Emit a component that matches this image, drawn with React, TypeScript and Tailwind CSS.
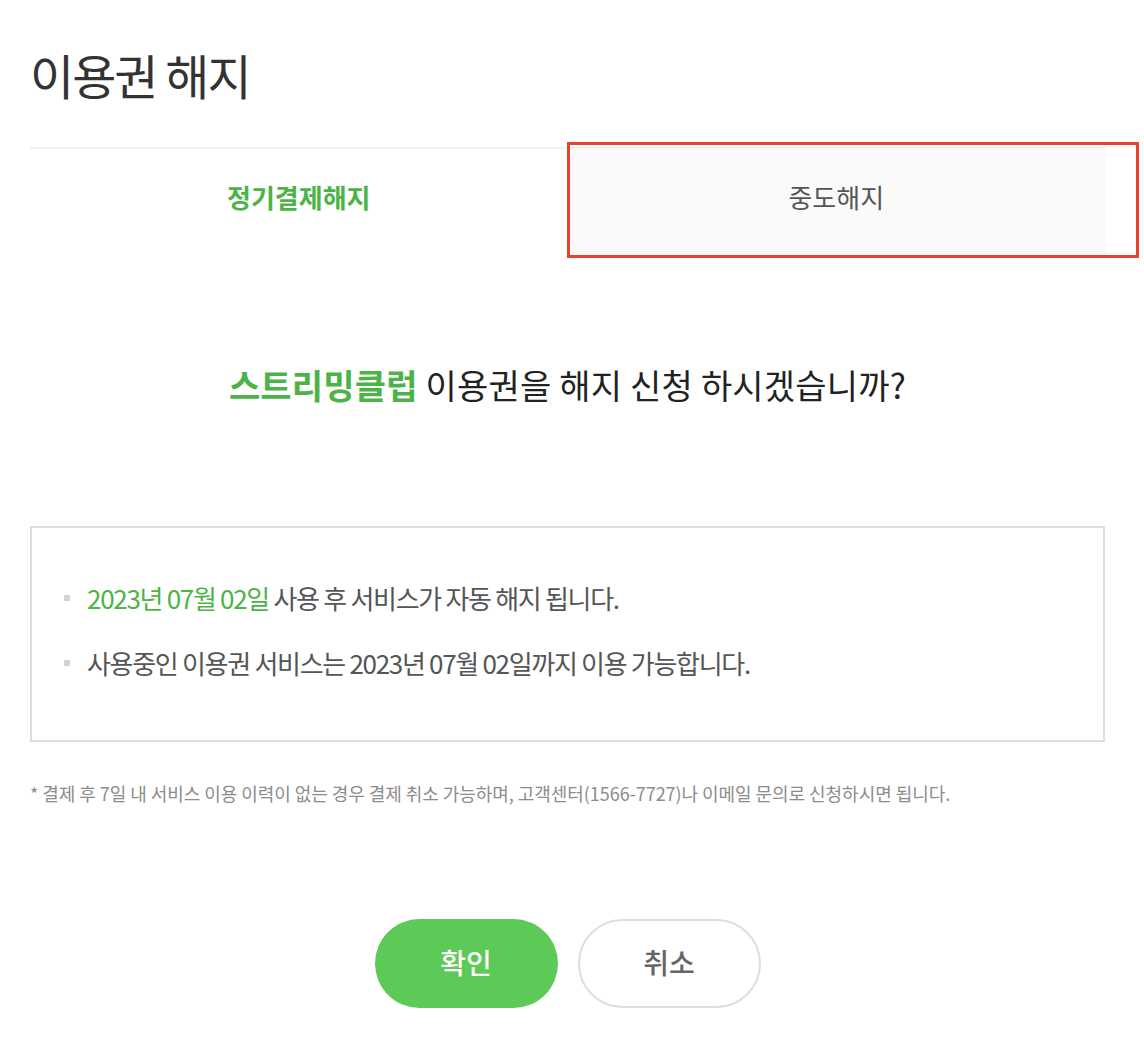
import React from 'react';

const font = { fontFamily: '"Noto Sans CJK KR", "Noto Sans", sans-serif' };

const Bullet: React.FC<{ children: React.ReactNode }> = ({ children }) => (
  <li className="flex items-center gap-[17px] text-[26px] leading-[32px] tracking-[-1.3px] text-[#555]">
    <span className="h-[6px] w-[6px] shrink-0 rounded-[1px] bg-[#d2d2d2]" />
    <span>{children}</span>
  </li>
);

const App: React.FC = () => {
  return (
    <div className="min-h-[1040px] w-full bg-white pb-[33px]" style={font}>
      <div className="ml-[30px] w-[1075px]">
        <h1 className="mt-[46px] text-[48px] leading-[56px] font-normal tracking-[-2px] text-[#333]">
          이용권 해지
        </h1>

        <div className="mt-[45px] grid grid-cols-2 border-t-2 border-[#f0f0f0]">
          <button className="flex h-[106px] items-center justify-center pb-[12px] text-[26px] font-bold text-[#4cb447]">
            정기결제해지
          </button>
          <div className="relative">
            <button className="flex h-[106px] w-full items-center justify-center bg-[#fafafa] pb-[12px] text-[26px] text-[#555]">
              중도해지
            </button>
            <div className="pointer-events-none absolute -top-[7px] -right-[34px] -bottom-[3px] -left-[1px] border-[3px] border-[#e8412c]" />
          </div>
        </div>

        <p className="mt-[110px] text-center text-[34px] leading-[40px] tracking-[0.2px] text-[#222]">
          <span className="font-bold text-[#4cb447]">스트리밍클럽</span> 이용권을 해지 신청 하시겠습니까?
        </p>

        <div className="mt-[121px] border-2 border-[#dddddd] pt-[54px] pb-[61px] pl-[32px]">
          <ul className="flex flex-col gap-[33px]">
            <Bullet>
              <span className="text-[#4cb447]">2023년 07월 02일</span> 사용 후 서비스가 자동 해지 됩니다.
            </Bullet>
            <Bullet>사용중인 이용권 서비스는 2023년 07월 02일까지 이용 가능합니다.</Bullet>
          </ul>
        </div>

        <p className="mt-[39px] text-[18px] leading-[24px] tracking-[-0.05px] text-[#8c8c8c]">
          * 결제 후 7일 내 서비스 이용 이력이 없는 경우 결제 취소 가능하며, 고객센터(1566-7727)나 이메일 문의로 신청하시면 됩니다.
        </p>

        <div className="mt-[114px] flex justify-center gap-[20px]">
          <button className="h-[89px] w-[183px] rounded-full bg-[#5dc956] pb-[4px] text-[28px] font-medium text-white">
            확인
          </button>
          <button className="h-[89px] w-[183px] rounded-full border-2 border-[#dedede] bg-white pb-[4px] text-[28px] font-medium text-[#666]">
            취소
          </button>
        </div>
      </div>
    </div>
  );
};

export default App;
